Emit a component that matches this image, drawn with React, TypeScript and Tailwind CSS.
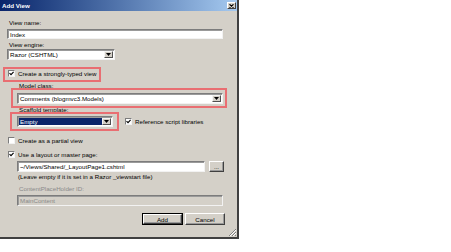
import React from "react";

const font = { fontFamily: '"Liberation Sans", Arial, sans-serif' };

function Field({
  className = "",
  children,
  disabled = false,
}: {
  className?: string;
  children?: React.ReactNode;
  disabled?: boolean;
}) {
  return (
    <div
      className={`flex items-center border border-t-[#7c7c7c] border-l-[#7c7c7c] border-b-[#f2f2f2] border-r-[#f2f2f2] shadow-[inset_1px_1px_0_#9a9a9a] ${
        disabled ? "bg-[#d4d0c8] text-[#8a8a8a]" : "bg-white text-black"
      } ${className}`}
    >
      {children}
    </div>
  );
}

function Arrow() {
  return (
    <div className="flex h-full w-[9px] shrink-0 items-center justify-center border border-t-[#f4f4f4] border-l-[#f4f4f4] border-b-[#505050] border-r-[#505050] bg-[#d4d0c8]">
      <svg width="5" height="3" viewBox="0 0 5 3">
        <path d="M0 0h5L2.5 3z" fill="#000" />
      </svg>
    </div>
  );
}

function Select({
  className = "",
  text,
  selected = false,
}: {
  className?: string;
  text: string;
  selected?: boolean;
}) {
  return (
    <Field className={`p-px ${className}`}>
      <div
        className={`flex h-full flex-1 items-center pl-[1px] ${
          selected ? "bg-[#0a246a] text-white" : ""
        }`}
      >
        {text}
      </div>
      <Arrow />
    </Field>
  );
}

function Check({ checked }: { checked: boolean }) {
  return (
    <div className="flex h-[7px] w-[7px] shrink-0 items-center justify-center border border-t-[#7c7c7c] border-l-[#7c7c7c] border-b-[#f2f2f2] border-r-[#f2f2f2] bg-white">
      {checked && (
        <svg width="5" height="5" viewBox="0 0 5 5">
          <path d="M0.5 2.2 L2 3.7 L4.6 0.8" stroke="#000" strokeWidth="1.1" fill="none" />
        </svg>
      )}
    </div>
  );
}

function Btn({
  children,
  className = "",
  isDefault = false,
}: {
  children: React.ReactNode;
  className?: string;
  isDefault?: boolean;
}) {
  return (
    <div className={`${isDefault ? "border border-black" : ""} ${className}`}>
      <div className="flex h-full w-full items-center justify-center border border-t-[#ffffff] border-l-[#ffffff] border-b-[#404040] border-r-[#404040] bg-[#d4d0c8] shadow-[inset_-1px_-1px_0_#9a9a9a]">
        {children}
      </div>
    </div>
  );
}

export default function App() {
  return (
    <div className="h-[252px] w-[451px] bg-white" style={font}>
      <div className="relative flex h-[239px] w-[239px] flex-col border-b-2 border-r-2 border-b-[#404040] border-r-[#404040] bg-[#d4d0c8] text-[6.2px] leading-[7px] text-black">
        {/* title bar */}
        <div className="flex h-[11px] shrink-0 items-center justify-between bg-gradient-to-r from-[#0a246a] to-[#a6caf0] pl-[2px] pr-[1px]">
          <span className="font-bold text-white">Add View</span>
          <div className="flex h-[7px] w-[9px] items-center justify-center border border-t-white border-l-white border-b-[#404040] border-r-[#404040] bg-[#d4d0c8]">
            <svg width="5" height="4" viewBox="0 0 5 4">
              <path d="M0.5 0.3 L4.5 3.7 M4.5 0.3 L0.5 3.7" stroke="#000" strokeWidth="1.1" />
            </svg>
          </div>
        </div>

        <div className="flex flex-col pl-[7px]">
          <div className="mt-[8px] pl-[2px]">View name:</div>
          <Field className="mt-[3px] h-[10px] w-[216px] pl-[2px]">Index</Field>

          <div className="mt-[2px] pl-[2px]">View engine:</div>
          <Select className="mt-[1px] h-[11px] w-[108px]" text="Razor (CSHTML)" />

          <div className="mt-[10px] flex h-[7px] items-center gap-[3px] pl-[1px]">
            <Check checked />
            <span>Create a strongly-typed view</span>
          </div>

          <div className="ml-[12px] mt-[5px]">Model class:</div>
          <Select className="ml-[10px] mt-[4px] h-[11px] w-[206px]" text="Comments (blogmvc3.Models)" />

          <div className="ml-[12px] mt-[2px]">Scaffold template:</div>
          <div className="ml-[10px] mt-[3px] flex items-center">
            <Select className="h-[11px] w-[96px]" text="Empty" selected />
            <div className="ml-[12px] flex items-center gap-[3px]">
              <Check checked />
              <span>Reference script libraries</span>
            </div>
          </div>

          <div className="mt-[10px] flex h-[7px] items-center gap-[3px] pl-[1px]">
            <Check checked={false} />
            <span>Create as a partial view</span>
          </div>

          <div className="mt-[7px] flex h-[7px] items-center gap-[3px] pl-[1px]">
            <Check checked />
            <span>Use a layout or master page:</span>
          </div>

          <div className="ml-[10px] mt-[3px] flex items-center gap-[4px]">
            <Field className="h-[11px] w-[188px] pl-[2px]">~/Views/Shared/_LayoutPage1.cshtml</Field>
            <Btn className="h-[11px] w-[15px]">...</Btn>
          </div>

          <div className="ml-[11px] mt-[1px]">(Leave empty if it is set in a Razor _viewstart file)</div>

          <div className="ml-[12px] mt-[5px] text-[#8a8a8a]">ContentPlaceHolder ID:</div>
          <Field disabled className="ml-[10px] mt-[3px] h-[11px] w-[206px] pl-[2px]">
            MainContent
          </Field>

          <div className="ml-[135px] mt-[7px] flex gap-[2px]">
            <Btn isDefault className="h-[12px] w-[41px]">Add</Btn>
            <Btn className="h-[12px] w-[40px]">Cancel</Btn>
          </div>
        </div>

        {/* resize grip */}
        <svg className="absolute bottom-[1px] right-[1px]" width="8" height="8" viewBox="0 0 8 8">
          <path d="M8 1 L1 8 M8 4 L4 8 M8 7 L7 8" stroke="#808080" strokeWidth="1" />
          <path d="M8 2 L2 8 M8 5 L5 8" stroke="#ffffff" strokeWidth="1" />
        </svg>

        {/* red annotation boxes */}
        <div className="pointer-events-none absolute left-[3px] top-[67px] h-[15px] w-[98px] border-2 border-[#e96e72]" />
        <div className="pointer-events-none absolute left-[11px] top-[88px] h-[20px] w-[216px] border-2 border-[#e96e72]" />
        <div className="pointer-events-none absolute left-[10px] top-[112px] h-[19px] w-[109px] border-2 border-[#e96e72]" />
      </div>
    </div>
  );
}
